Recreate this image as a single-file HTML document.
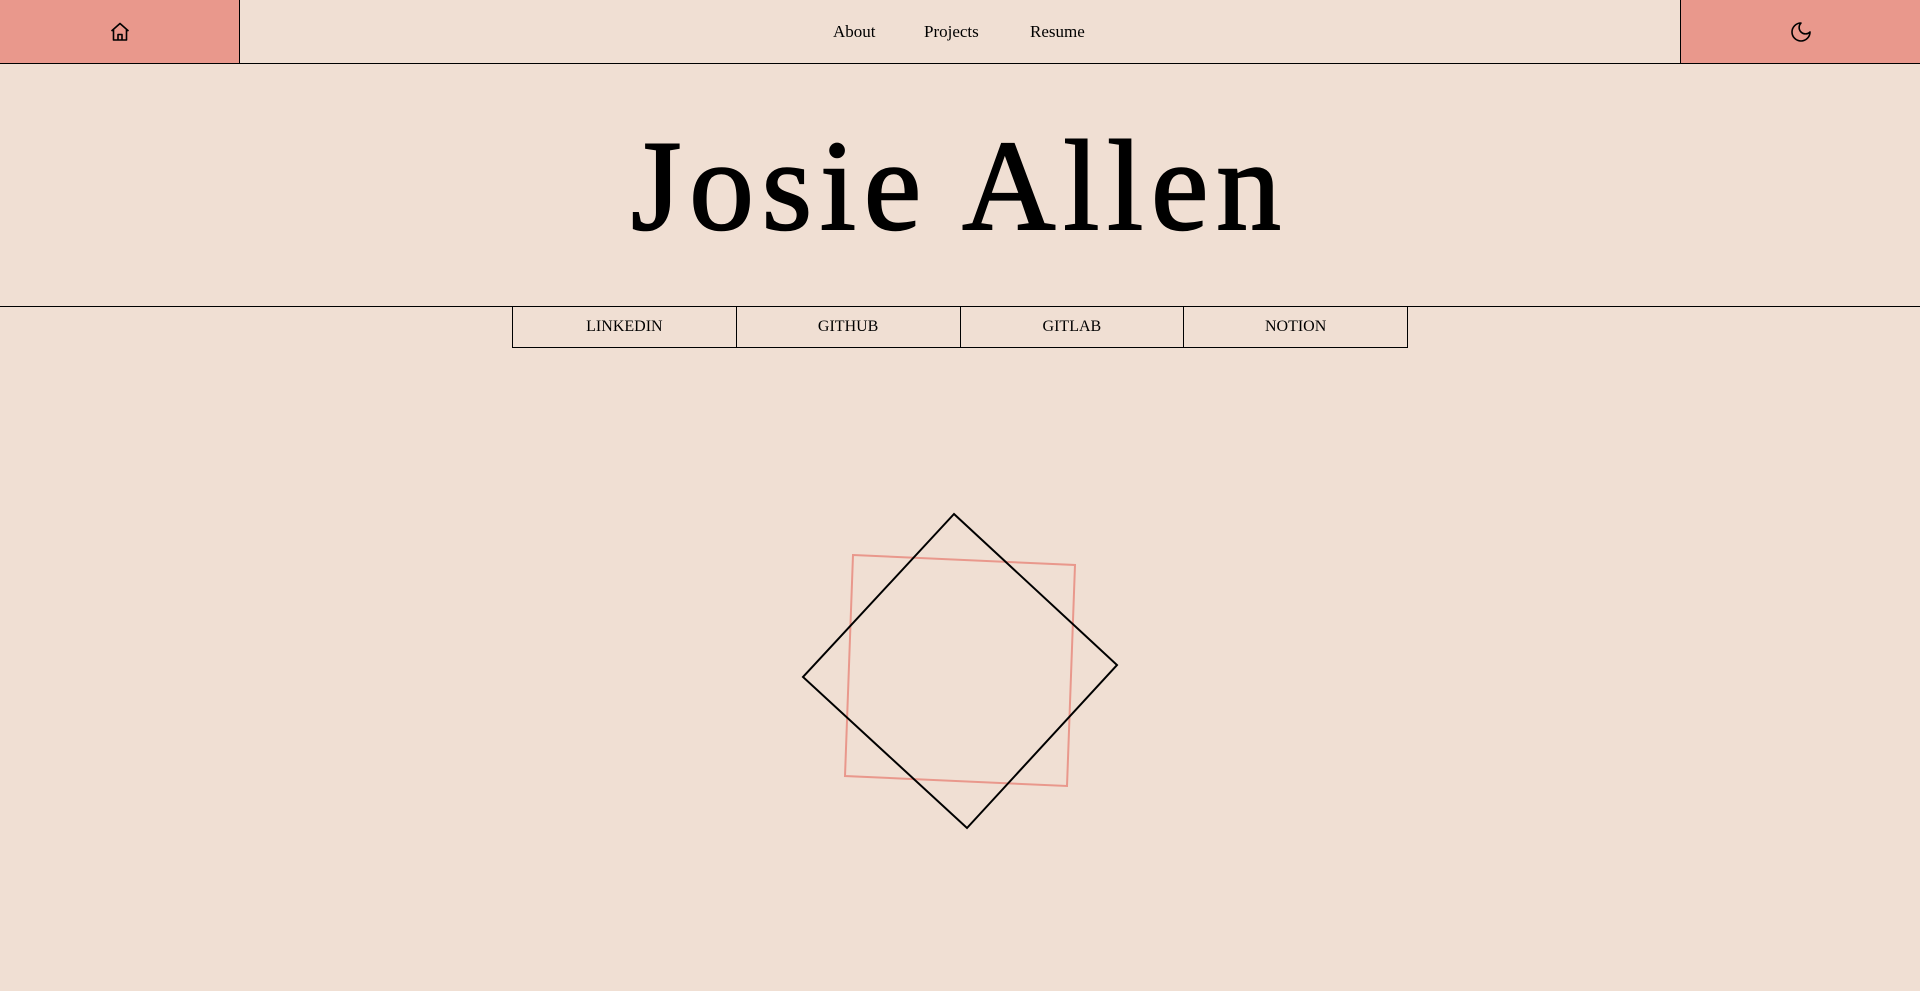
<!DOCTYPE html>
<html><head><meta charset="utf-8"><style>
html,body{margin:0;padding:0;background:#f0dfd3;width:1920px;height:991px;overflow:hidden;font-family:"Liberation Serif",serif;color:#000}
.hdr{position:absolute;left:0;top:0;width:1920px;height:64px;border-bottom:1px solid #000;box-sizing:border-box}
.lb{position:absolute;left:0;top:0;width:240px;height:63px;background:#e9988c;border-right:1px solid #000;box-sizing:border-box}
.rb{position:absolute;left:1680px;top:0;width:240px;height:63px;background:#e9988c;border-left:1px solid #000;box-sizing:border-box}
.nav a{position:absolute;top:22px;font-size:17px;color:#000;text-decoration:none}
h1{position:absolute;left:0;width:1920px;top:121px;margin:0;text-align:center;font-size:129px;font-weight:normal;line-height:129px;letter-spacing:8px;-webkit-text-stroke:2px #000}
.line{position:absolute;left:0;top:306px;width:1920px;border-top:1px solid #000}
.btns{position:absolute;left:512px;top:306px;width:896px;height:42px;display:flex;border:1px solid #000;border-top:none;box-sizing:border-box}
.btns div{flex:1;text-align:center;line-height:41px;font-size:16px;border-right:1px solid #000}
.btns div:last-child{border-right:none}
svg.s{position:absolute;left:0;top:0}
</style></head><body>
<div class="hdr">
<div class="lb"><svg width="24" height="24" viewBox="0 0 24 24" style="position:absolute;left:108px;top:20px" fill="none" stroke="#000" stroke-width="1.6" stroke-linejoin="round"><path d="M3.5 11 L12 3.5 L20.5 11 M5.5 9.5 V20 H18.5 V9.5 M10 20 V14.5 H14 V20"/></svg></div>
<div class="nav"><a style="left:833px">About</a><a style="left:924px">Projects</a><a style="left:1030px">Resume</a></div>
<div class="rb"><svg width="24" height="24" viewBox="0 0 24 24" style="position:absolute;left:108px;top:20px" fill="none" stroke="#000" stroke-width="1.6" stroke-linejoin="round"><path d="M12 3a6 6 0 0 0 9 9 9 9 0 1 1-9-9z"/></svg></div>
</div>
<h1>Josie Allen</h1>
<div class="line"></div>
<div class="btns"><div>LINKEDIN</div><div>GITHUB</div><div>GITLAB</div><div>NOTION</div></div>
<svg class="s" width="1920" height="991"><polygon points="853,555 1075,565 1067,786 845,776" fill="none" stroke="#e9988c" stroke-width="2"/><polygon points="954,514 1117,665 967,828 803,677" fill="none" stroke="#000" stroke-width="2"/></svg>
</body></html>
